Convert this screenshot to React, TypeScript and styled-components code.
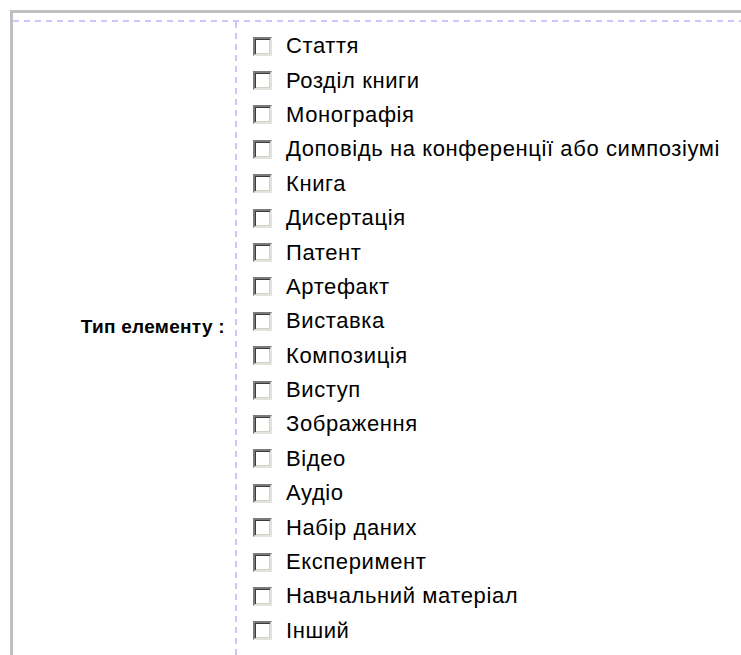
import React from "react";
import styled, { createGlobalStyle } from "styled-components";

const GlobalStyle = createGlobalStyle`
  html, body {
    margin: 0;
    padding: 0;
    background: #ffffff;
  }
  body {
    font-family: "Liberation Sans", Arial, sans-serif;
    color: #000000;
  }
`;

const Frame = styled.div`
  margin: 10px 0 0 10px;
  height: 645px;
  box-sizing: border-box;
  border-top: 3px solid #c0c0c0;
  border-left: 3px solid #c0c0c0;
  padding-top: 7px;
  overflow: hidden;
`;

const FieldRow = styled.div`
  display: grid;
  grid-template-columns: 224px 1fr;
  background-image: linear-gradient(to right, #c8c8ff 6px, transparent 6px);
  background-size: 11px 2px;
  background-repeat: repeat-x;
  background-position: 0 0;
  padding-top: 2px;
  height: 100%;
  box-sizing: border-box;
`;

const LabelCell = styled.div`
  display: flex;
  align-items: center;
  justify-content: flex-end;
  padding-right: 12px;
  background-image: linear-gradient(to bottom, #c8c8ff 6px, transparent 6px);
  background-size: 2px 11px;
  background-repeat: repeat-y;
  background-position: right 0;
  padding-bottom: 24px;
`;

const Label = styled.span`
  font-weight: bold;
  font-size: 19px;
  letter-spacing: 0.3px;
`;

const OptionList = styled.ul`
  list-style: none;
  margin: 0;
  padding: 7px 0 0 16px;
  display: flex;
  flex-direction: column;
`;

const Option = styled.li`
  display: flex;
  align-items: center;
  height: 34.4px;
  font-size: 22px;
  letter-spacing: 0.6px;
`;

const Box = styled.span`
  flex: none;
  width: 19px;
  height: 19px;
  box-sizing: border-box;
  border-top: 2px solid #7b7b7b;
  border-left: 2px solid #7b7b7b;
  border-right: 2px solid #e4e2dc;
  border-bottom: 2px solid #e4e2dc;
  box-shadow: inset 1px 1px 0 #3c3c3c, inset -1px -1px 0 #d4d0c8;
  background: #ffffff;
  margin-right: 14px;
`;

const items = [
  "Стаття",
  "Розділ книги",
  "Монографія",
  "Доповідь на конференції або симпозіумі",
  "Книга",
  "Дисертація",
  "Патент",
  "Артефакт",
  "Виставка",
  "Композиція",
  "Виступ",
  "Зображення",
  "Відео",
  "Аудіо",
  "Набір даних",
  "Експеримент",
  "Навчальний матеріал",
  "Інший",
];

export default function App() {
  return (
    <>
      <GlobalStyle />
      <Frame>
        <FieldRow>
          <LabelCell>
            <Label>Тип елементу :</Label>
          </LabelCell>
          <OptionList>
            {items.map((t) => (
              <Option key={t}>
                <Box />
                {t}
              </Option>
            ))}
          </OptionList>
        </FieldRow>
      </Frame>
    </>
  );
}
